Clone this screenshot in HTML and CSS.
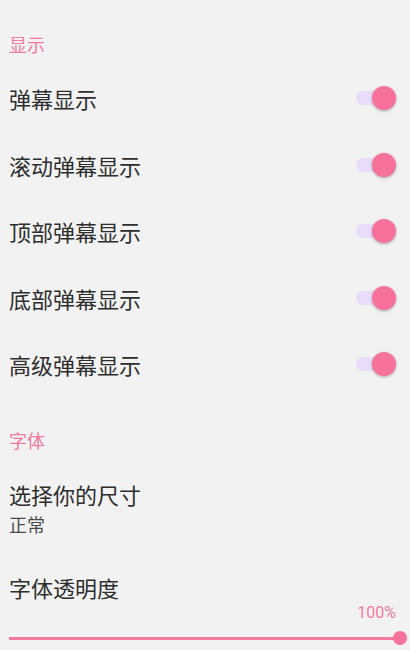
FILE: index.html
```html
<!DOCTYPE html>
<html lang="zh-CN">
<head>
<meta charset="utf-8">
<link rel="stylesheet" href="styles.css">
</head>
<body>
<div class="page">
  <div class="section-title first">显示</div>
  <div class="row"><span class="label">弹幕显示</span><span class="switch"><span class="track"></span><span class="thumb"></span></span></div>
  <div class="row"><span class="label">滚动弹幕显示</span><span class="switch"><span class="track"></span><span class="thumb"></span></span></div>
  <div class="row"><span class="label">顶部弹幕显示</span><span class="switch"><span class="track"></span><span class="thumb"></span></span></div>
  <div class="row"><span class="label">底部弹幕显示</span><span class="switch"><span class="track"></span><span class="thumb"></span></span></div>
  <div class="row"><span class="label">高级弹幕显示</span><span class="switch"><span class="track"></span><span class="thumb"></span></span></div>
  <div class="section-title second">字体</div>
  <div class="item">
    <div class="label">选择你的尺寸</div>
    <div class="sub">正常</div>
  </div>
  <div class="item opacity">
    <div class="label">字体透明度</div>
    <div class="value">100%</div>
    <div class="slider"><span class="slider-track"></span><span class="slider-thumb"></span></div>
  </div>
</div>
</body>
</html>
```
FILE: styles.css
```css
html, body {
  margin: 0;
  padding: 0;
  background: #f2f2f2;
}
.page {
  width: 410px;
  height: 650px;
  overflow: hidden;
  font-family: "Noto Sans CJK SC", "Noto Sans", sans-serif;
  color: #2e2e2e;
}
.section-title {
  color: #f27a9f;
  font-size: 18px;
  line-height: 20px;
  padding-left: 9px;
}
.section-title.first {
  padding-top: 34px;
  padding-bottom: 11px;
}
.section-title.second {
  padding-top: 32px;
  padding-bottom: 29.5px;
}
.row {
  height: 66.5px;
  display: flex;
  align-items: center;
  justify-content: space-between;
  padding: 0 14px 0 9px;
}
.label {
  font-size: 22px;
  line-height: 30px;
}
.item {
  padding-left: 9px;
}
.sub {
  font-size: 18px;
  line-height: 30px;
  color: #4a4a4a;
}
.opacity {
  margin-top: 33px;
}
.value {
  font-family: Roboto, "Noto Sans", sans-serif;
  color: #f27a9f;
  font-size: 16px;
  line-height: 18px;
  text-align: right;
  padding-right: 14px;
  margin-top: 1.5px;
}
.switch {
  position: relative;
  width: 40px;
  height: 24px;
  display: block;
}
.track {
  position: absolute;
  left: 0;
  top: 5px;
  width: 36px;
  height: 14px;
  border-radius: 7px;
  background: #e9dcfb;
}
.thumb {
  position: absolute;
  right: 0;
  top: 0;
  width: 24px;
  height: 24px;
  border-radius: 50%;
  background: #f7729a;
  box-shadow: 0 1px 3px rgba(0, 0, 0, 0.3);
}
.slider {
  position: relative;
  width: 398px;
  height: 14px;
  margin-top: 9.5px;
}
.slider-track {
  position: absolute;
  left: 0;
  right: 7px;
  top: 5.5px;
  height: 3px;
  background: #f27a9c;
}
.slider-thumb {
  position: absolute;
  right: 0;
  top: 0;
  width: 14px;
  height: 14px;
  border-radius: 50%;
  background: #f7729a;
}
```
